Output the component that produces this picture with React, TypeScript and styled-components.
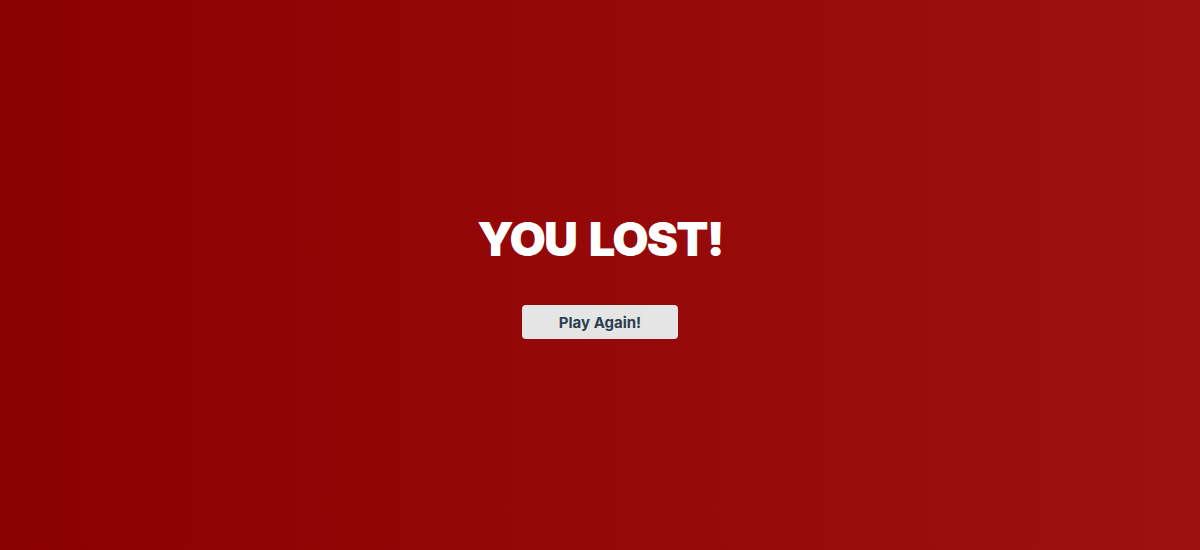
import styled, { createGlobalStyle } from 'styled-components';

const GlobalStyle = createGlobalStyle`
  html, body {
    margin: 0;
    padding: 0;
  }
  body {
    font-family: Inter, "Noto Sans", sans-serif;
  }
`;

const App = () => {
  return (
    <>
      <GlobalStyle />
      <Screen>
        <Title>YOU LOST!</Title>
        <RestartButton type="button">Play Again!</RestartButton>
      </Screen>
    </>
  );
};

export default App;

const Screen = styled.main`
  width: 100%;
  height: 550px;
  display: flex;
  flex-direction: column;
  align-items: center;
  justify-content: center;
  background: linear-gradient(to right, #8b0000, #9e1111);
  padding-top: 4px;
  box-sizing: border-box;
`;

const Title = styled.h1`
  margin: 0 0 43px;
  font-family: Inter, "DejaVu Sans", sans-serif;
  font-size: 47px;
  font-weight: 900;
  letter-spacing: -1.8px;
  word-spacing: 5px;
  line-height: 1;
  color: #ffffff;
`;

const RestartButton = styled.button`
  width: 156px;
  height: 34px;
  border: none;
  border-radius: 4px;
  background-color: #e5e5e5;
  color: #2c3e50;
  font-family: Inter, "Noto Sans", sans-serif;
  font-size: 15px;
  font-weight: 700;
  cursor: pointer;
`;
